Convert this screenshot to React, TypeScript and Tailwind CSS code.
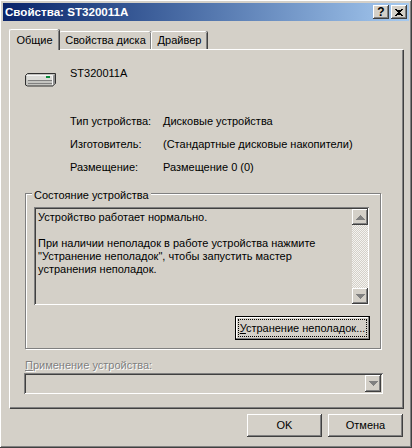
const raised = "shadow-[inset_-1px_-1px_0_#404040,inset_1px_1px_0_#ffffff,inset_-2px_-2px_0_#808080]";
const sunken = "shadow-[inset_1px_1px_0_#808080,inset_-1px_-1px_0_#ffffff,inset_2px_2px_0_#404040]";

function Etched({ children, className }: { children?: React.ReactNode; className?: string }) {
  return <div className={`border border-[#808080] shadow-[1px_1px_0_#ffffff,inset_1px_1px_0_#ffffff] ${className ?? ""}`}>{children}</div>;
}

function Tab({ label, active, width }: { label: string; active?: boolean; width: string }) {
  return (
    <div
      className={
        active
          ? `relative z-10 -mb-px h-[21px] ${width} flex items-center justify-center border-l border-t border-white rounded-t-[2px] bg-[#d4d0c8] shadow-[inset_-1px_0_0_#808080,1px_0_0_#404040]`
          : `h-[18px] ${width} flex items-center justify-center border-l border-t border-white rounded-t-[2px] bg-[#d4d0c8] shadow-[inset_-1px_0_0_#808080,1px_0_0_#404040]`
      }
    >
      {label}
    </div>
  );
}

function Info({ a, b }: { a: string; b: string }) {
  return (
    <div className="flex h-[23px] items-center">
      <div className="w-[93px]">{a}</div>
      <div>{b}</div>
    </div>
  );
}

function Arrow({ up, color }: { up?: boolean; color: string }) {
  return (
    <svg width="9" height="5" viewBox="0 0 9 5" className="block">
      <path d={up ? "M4 0h1v1h1v1h1v1h1v1h1v1H0V4h1V3h1V2h1V1h1z" : "M0 0h9v1H8v1H7v1H6v1H5v1H4V4H3V3H2V2H1V1H0z"} fill={color} />
    </svg>
  );
}

export default function App() {
  return (
    <div
      className={`w-[412px] h-[448px] overflow-hidden bg-[#d4d0c8] p-[3px] flex flex-col text-black text-[11px] font-['Liberation_Sans',sans-serif] ${raised}`}
    >
      <div className="h-[18px] shrink-0 flex items-center justify-between pl-[2px] pr-[2px] bg-gradient-to-r from-[#0a246a] to-[#a6caf0]">
        <span className="text-white font-bold text-[11.6px]">Свойства: ST320011A</span>
        <div className="flex">
          <div className={`w-[16px] h-[14px] flex items-center justify-center bg-[#d4d0c8] font-bold text-[12px] mr-[2px] ${raised}`}>?</div>
          <div className={`w-[16px] h-[14px] flex items-center justify-center bg-[#d4d0c8] ${raised}`}>
            <svg width="8" height="7" viewBox="0 0 8 7"><path d="M0 0h2v1h4V0h2v1H7v1H6v1H5v1h1v1h1v1h1v1H6V6H2v1H0V6h1V5h1V4h1V3H2V2H1V1H0z" fill="#000" /></svg>
          </div>
        </div>
      </div>

      <div className="mt-[8px] pl-[6px] pr-[6px] flex flex-col flex-1 min-h-0">
        <div className="flex h-[20px] items-end">
          <Tab label="Общие" active width="w-[50px]" />
          <Tab label="Свойства диска" width="w-[92px]" />
          <Tab label="Драйвер" width="w-[56px]" />
        </div>
        <div className="h-[359px] w-[394px] border-l border-t border-white shadow-[inset_-1px_-1px_0_#808080,1px_1px_0_#404040] pt-[15px] pl-[15px] pr-[21px] flex flex-col">
          <div className="flex h-[36px]">
            <div className="w-[45px] pt-[8px]">
              <svg width="31" height="14" viewBox="0 0 31 14" className="block">
                <path d="M2.5 .5h28v10l-2.500 2.500H2.500l-2-1V2.500z" fill="#c4c4c0" stroke="#303030" />
                <path d="M1.500 2.500h26V12" fill="none" stroke="#f4f4f4" />
                <path d="M2 3h25v4H2z" fill="#dcdcd8" />
                <path d="M3 7.500h24M3 10.500h24" stroke="#808080" />
                <path d="M28 3l2-2v10l-2 2z" fill="#909090" />
                <rect x="21" y="3" width="4" height="2" fill="#0a8a3a" />
              </svg>
            </div>
            <div>ST320011A</div>
          </div>
          <div className="mt-[9px] pl-[45px]">
            <Info a="Тип устройства:" b="Дисковые устройства" />
            <Info a="Изготовитель:" b="(Стандартные дисковые накопители)" />
            <Info a="Размещение:" b="Размещение 0 (0)" />
          </div>
          <Etched className="relative mt-[14px] w-[356px] h-[156px] pt-[13px] pl-[8px]">
            <span className="absolute left-[6px] -top-[7px] bg-[#d4d0c8] px-[2px]">Состояние устройства</span>
            <div className={`w-[335px] h-[98px] flex ${sunken} pl-[2px] pt-[2px] pb-[1px] pr-[1px]`}>
              <div className="flex-1 pl-[2px] pt-[2px] leading-[13px]">
                <p>Устройство работает нормально.</p>
                <p className="mt-[13px]">При наличии неполадок в работе устройства нажмите</p>
                <p>"Устранение неполадок", чтобы запустить мастер</p>
                <p>устранения неполадок.</p>
              </div>
              <div className="w-[16px] flex flex-col bg-[repeating-conic-gradient(#f4f3f0_0_25%,#d4d0c8_0_50%)] bg-[length:2px_2px]">
                <div className={`h-[16px] flex items-center justify-center bg-[#d4d0c8] ${raised}`}><Arrow up color="#808080" /></div>
                <div className="flex-1" />
                <div className={`h-[16px] flex items-center justify-center bg-[#d4d0c8] ${raised}`}><Arrow color="#808080" /></div>
              </div>
            </div>
            <div className="mt-[11px] ml-[201px] w-[135px] h-[24px] border border-black p-[2px] shadow-[inset_-1px_-1px_0_#808080,inset_1px_1px_0_#ffffff]">
              <div className="h-full border border-dotted border-black flex items-center justify-center">
                <span className="whitespace-nowrap"><span className="underline">У</span>странение неполадок...</span>
              </div>
            </div>
          </Etched>
          <div className="mt-[8px] h-[16px] leading-[16px] text-[#808080] [text-shadow:1px_1px_0_#ffffff]"><span className="underline">П</span>рименение устройства:</div>
          <div className={`-ml-px w-[359px] h-[21px] flex justify-end ${sunken} p-[2px]`}>
            <div className={`w-[16px] h-[17px] flex items-center justify-center bg-[#d4d0c8] ${raised}`}><Arrow color="#808080" /></div>
          </div>
        </div>
        <div className="mt-[6px] flex justify-end gap-[6px]">
          <div className={`w-[75px] h-[23px] flex items-center justify-center ${raised}`}>OK</div>
          <div className={`w-[75px] h-[23px] flex items-center justify-center ${raised}`}>Отмена</div>
        </div>
      </div>
    </div>
  );
}
